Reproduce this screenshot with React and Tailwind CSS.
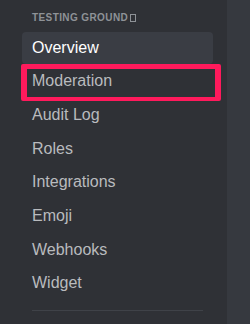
import React from 'react';

const items = ['Overview', 'Moderation', 'Audit Log', 'Roles', 'Integrations', 'Emoji', 'Webhooks', 'Widget'];

export default function App() {
    return (
        <div className="flex w-[250px] h-[324px] overflow-hidden font-['Liberation_Sans',sans-serif]">
            {/* Sidebar */}
            <div className="w-[227px] shrink-0 bg-[#2f3136] pt-[10px] pl-[22px] pr-[14px]">
                <div className="h-[16px] pl-[10px] text-[10px] leading-[16px] font-bold tracking-[0.4px] text-[#8e9297] uppercase whitespace-nowrap">
                    Testing Ground
                    <span className="inline-block align-[-1px] ml-[2px] w-[6px] h-[8px] border border-[#8e9297]" />
                </div>

                {/* Navigation */}
                <nav className="mt-[5.5px] flex flex-col gap-[1.7px]">
                    {items.map((item, i) => (
                        <div
                            key={item}
                            className={`relative h-[32px] px-[10px] flex items-center rounded-[4px] text-[16px] leading-[20px]
                                      ${i === 0 ? 'bg-[#3a3d44] text-white' : 'text-[#b9bbbe]'}`}
                        >
                            {item}
                            {i === 1 && (
                                <div className="absolute -left-[1px] -top-[1.2px] w-[200px] h-[37px] border-[#ff1a5c] border-t-[5px] border-l-[6px] border-r-[6px] border-b-[4px] rounded-[2px]" />
                            )}
                        </div>
                    ))}
                </nav>

                <div className="mt-[10.6px] ml-[10px] w-[171px] h-px bg-[#3f4248]" />
            </div>

            {/* Content */}
            <div className="flex-1 bg-[#36393f]" />
        </div>
    );
}
